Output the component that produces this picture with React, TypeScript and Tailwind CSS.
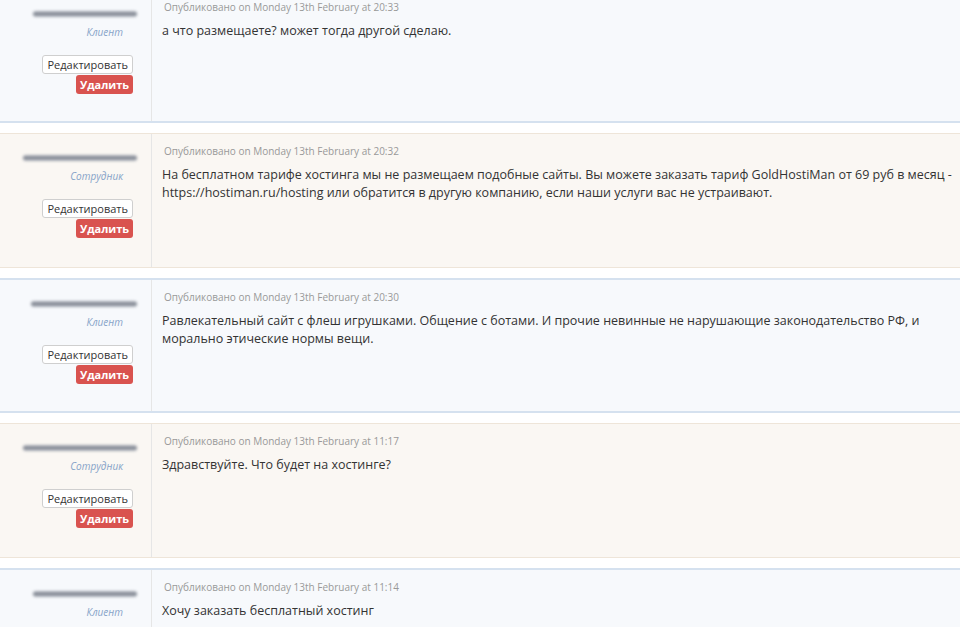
const posts = [
  {
    role: "Клиент",
    staff: false,
    date: "Monday 13th February at 20:33",
    text: "а что размещаете? может тогда другой сделаю.",
    nameW: "w-[104px]",
  },
  {
    role: "Сотрудник",
    staff: true,
    date: "Monday 13th February at 20:32",
    text: "На бесплатном тарифе хостинга мы не размещаем подобные сайты. Вы можете заказать тариф GoldHostiMan от 69 руб в месяц - https://hostiman.ru/hosting или обратится в другую компанию, если наши услуги вас не устраивают.",
    nameW: "w-[114px]",
  },
  {
    role: "Клиент",
    staff: false,
    date: "Monday 13th February at 20:30",
    text: "Равлекательный сайт с флеш игрушками. Общение с ботами. И прочие невинные не нарушающие законодательство РФ, и морально этические нормы вещи.",
    nameW: "w-[106px]",
  },
  {
    role: "Сотрудник",
    staff: true,
    date: "Monday 13th February at 11:17",
    text: "Здравствуйте. Что будет на хостинге?",
    nameW: "w-[114px]",
  },
  {
    role: "Клиент",
    staff: false,
    date: "Monday 13th February at 11:14",
    text: "Хочу заказать бесплатный хостинг",
    nameW: "w-[104px]",
  },
]

function Post({ post }: { post: (typeof posts)[number] }) {
  const box = post.staff
    ? "bg-[#faf7f3] border-t border-b border-[#eee5d9]"
    : "bg-[#f7f9fc] border-t-2 border-b-2 border-[#d5e1ef]"
  return (
    <div className={`flex h-[135px] mb-[10px] overflow-hidden ${box}`}>
      <div className="w-[152px] shrink-0 border-r border-[#e6e6e6] flex flex-col items-end">
        <div className={`mt-[21px] mr-[14px] h-[6px] ${post.nameW} rounded-full bg-[linear-gradient(180deg,#b3b8c0,#7a808b,#b9bec6)] blur-[1.5px]`} />
        <div className="mt-[8px] mr-[28px] text-[10px] leading-[14px] italic text-[#86a3c8]">
          {post.role}
        </div>
        <button className="mt-[16px] mr-[18px] h-[19px] px-[4px] bg-white border border-[#cfcfcf] rounded-[3px] text-[11px] leading-[17px] text-[#333]">
          Редактировать
        </button>
        <button className="mt-px mr-[18px] h-[19px] px-[4px] bg-[#d9534f] rounded-[3px] text-[11px] leading-[19px] font-bold text-white">
          Удалить
        </button>
      </div>
      <div className="flex-1 pl-[10px] pr-[4px] pt-[10px]">
        <div className="pl-[2px] text-[10px] leading-[14px] text-[#999]">
          Опубликовано on {post.date}
        </div>
        <p className="mt-[8px] text-[12.5px] leading-[18px] text-[#333]">{post.text}</p>
      </div>
    </div>
  )
}

export default function App() {
  return (
    <div className="w-[960px] h-[627px] overflow-hidden bg-white font-['Open_Sans',sans-serif]">
      <div className="-mt-[12px]">
        {posts.map((post, i) => (
          <Post key={i} post={post} />
        ))}
      </div>
    </div>
  )
}
